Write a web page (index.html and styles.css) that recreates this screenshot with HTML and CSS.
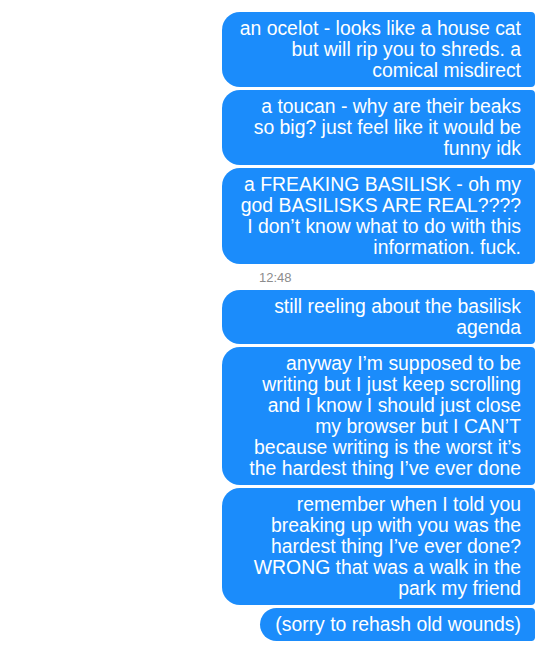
FILE: index.html
```html
<!DOCTYPE html>
<html lang="en">
<head>
    <meta charset="UTF-8">
    <meta name="viewport" content="width=device-width, initial-scale=1.0">
    <title>Messages</title>
    <link rel="stylesheet" href="styles.css">
</head>
<body>
    <div class="thread">
        <div class="bubble">an ocelot - looks like a house cat but will rip you to shreds. a comical misdirect</div>
        <div class="bubble">a toucan - why are their beaks so big? just feel like it would be funny idk</div>
        <div class="bubble">a FREAKING BASILISK - oh my god BASILISKS ARE REAL???? I don’t know what to do with this information. fuck.</div>
        <div class="timestamp">12:48</div>
        <div class="bubble">still reeling about the basilisk agenda</div>
        <div class="bubble">anyway I’m supposed to be writing but I just keep scrolling and I know I should just close my browser but I CAN’T because writing is the worst it’s the hardest thing I’ve ever done</div>
        <div class="bubble">remember when I told you breaking up with you was the hardest thing I’ve ever done? WRONG that was a walk in the park my friend</div>
        <div class="bubble">(sorry to rehash old wounds)</div>
    </div>
</body>
</html>
```

FILE: styles.css
```css
body {
    margin: 0;
    background-color: #FFFFFF;
    font-family: "Liberation Sans", Arial, sans-serif;
}
.thread {
    width: 313px;
    margin: 0 5px 0 auto;
    padding-top: 12px;
    display: flex;
    flex-direction: column;
    align-items: flex-end;
    gap: 3px;
}
.bubble {
    box-sizing: border-box;
    max-width: 313px;
    padding: 6px 14px 6px 15px;
    background-color: #1B8CFB;
    color: #FFFFFF;
    font-size: 19.4px;
    line-height: 21px;
    text-align: right;
    border-radius: 18px 4px 4px 18px;
}
.timestamp {
    align-self: flex-start;
    padding-left: 37px;
    height: 20px;
    color: #8C8C8C;
    font-size: 13px;
    line-height: 21px;
}
```
